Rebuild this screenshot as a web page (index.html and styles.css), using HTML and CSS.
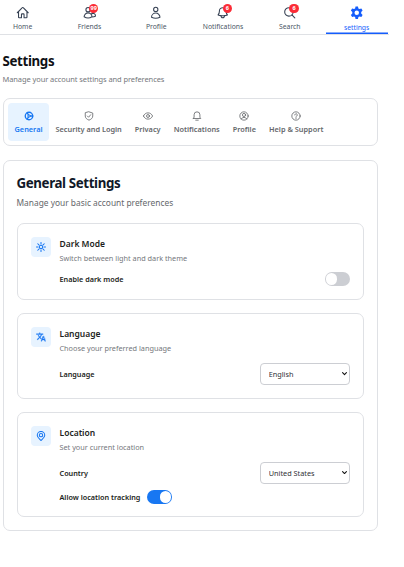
FILE: index.html
```html
<!DOCTYPE html>
<html lang="en">
<head>
<meta charset="utf-8">
<title>Settings</title>
<link rel="stylesheet" href="styles.css">
</head>
<body>
<nav class="nav">
  <a class="nav-item"><svg class="nav-icon" viewBox="0 0 24 24"><path d="M2.3 12 11.2 3a1.1 1.1 0 0 1 1.6 0l8.9 9M4.5 9.8v10.1c0 .6.5 1.1 1.1 1.1h4.1v-5.9c0-.6.5-1.1 1.1-1.1h2.4c.6 0 1.1.5 1.1 1.1V21h4.1c.6 0 1.1-.5 1.1-1.1V9.8"/></svg><span>Home</span></a>
  <a class="nav-item"><svg class="nav-icon" viewBox="0 0 24 24"><circle cx="9" cy="6.5" r="3.8"/><circle cx="18" cy="8.5" r="2.7"/><path d="M2 19.2a7 7 0 0 1 14 0 13 13 0 0 1-14 0ZM16 19.4c2.3 0 4.2-.2 6-1.2a4.2 4.2 0 0 0-7.7-3"/></svg><b class="badge">99</b><span>Friends</span></a>
  <a class="nav-item"><svg class="nav-icon" viewBox="0 0 24 24"><circle cx="12" cy="6" r="3.8"/><path d="M4.5 20.1a7.5 7.5 0 0 1 15 0A17.500 17.500 0 0 1 12 21.800c-2.700 0-5.200-.6-7.500-1.700Z"/></svg><span>Profile</span></a>
  <a class="nav-item"><svg class="nav-icon" viewBox="0 0 24 24"><path d="M14.900 17.100a24 24 0 0 0 5.400-1.300A9 9 0 0 1 18 9.800V9A6 6 0 0 0 6 9v.8a9 9 0 0 1-2.300 6 24 24 0 0 0 5.400 1.300m5.800 0a24 24 0 0 1-5.800 0m5.800 0a3 3 0 1 1-5.800 0"/></svg><b class="badge">6</b><span>Notifications</span></a>
  <a class="nav-item"><svg class="nav-icon" viewBox="0 0 24 24"><circle cx="10.500" cy="10.500" r="7.500"/><path d="m21 21-5.200-5.200"/></svg><b class="badge">6</b><span>Search</span></a>
  <a class="nav-item current"><svg class="nav-icon" viewBox="0 0 24 24"><path class="solid" fill-rule="evenodd" d="M9.800 1h4.400l.7 3.300 2 1.100 3.300-1 2.200 3.800-2.500 2.300v2.900l2.500 2.400-2.200 3.800-3.300-1-2 1.100-.7 3.300H9.800l-.7-3.300-2-1.100-3.300 1-2.200-3.800 2.500-2.400v-2.900L1.600 8.200l2.200-3.800 3.300 1 2-1.100ZM12 8a4 4 0 1 0 0 8 4 4 0 0 0 0-8Z"/></svg><span>settings</span></a>
</nav>
<main class="page">
  <h1>Settings</h1>
  <p class="lead">Manage your account settings and preferences</p>
  <div class="tabs">
    <a class="tab active"><svg class="icon" viewBox="0 0 24 24"><circle class="thick" cx="12" cy="12" r="9"/><circle cx="12" cy="12" r="3"/><path class="thick" d="M15 12h6M10.500 9.400l-3-5.200M10.500 14.600l-3 5.200"/></svg><span>General</span></a>
    <a class="tab"><svg class="icon" viewBox="0 0 24 24"><path d="m8 12 3 3 5-6M12 2 21 5v7c0 5-4 8-9 10-5-2-9-5-9-10V5Z"/></svg><span>Security and Login</span></a>
    <a class="tab"><svg class="icon" viewBox="0 0 24 24"><path d="M1 12c2-4.500 6-7.500 11-7.500s9 3 11 7.500c-2 4.500-6 7.500-11 7.500S3 16.500 1 12Z"/><circle cx="12" cy="12" r="3.500"/></svg><span>Privacy</span></a>
    <a class="tab"><svg class="icon" viewBox="0 0 24 24"><path d="M3 18h18l-2-3V9A7 7 0 0 0 5 9v6ZM9 22h6"/></svg><span>Notifications</span></a>
    <a class="tab"><svg class="icon" viewBox="0 0 24 24"><circle cx="12" cy="12" r="10"/><circle cx="12" cy="9.500" r="3.800"/><path d="M5.500 19a7.500 7.500 0 0 1 13 0"/></svg><span>Profile</span></a>
    <a class="tab"><svg class="icon" viewBox="0 0 24 24"><circle cx="12" cy="12" r="10"/><path d="M9 9.500a3 3 0 1 1 4.500 2.600c-1 .6-1.500 1-1.500 2.200M12 16.500v1.500"/></svg><span>Help &amp; Support</span></a>
  </div>
  <section class="panel">
    <h2>General Settings</h2>
    <p class="sub">Manage your basic account preferences</p>
    <article class="card dark-mode">
      <div class="tile"><svg class="icon" viewBox="0 0 24 24"><circle cx="12" cy="12" r="4"/><path d="M12 1v4M12 19v4M1 12h4M19 12h4M4.200 4.200 7 7M17 17l2.800 2.800M4.200 19.800 7 17M17 7l2.800-2.800"/></svg></div>
      <div class="body">
        <h3>Dark Mode</h3>
        <p class="desc">Switch between light and dark theme</p>
        <div class="row"><span class="label">Enable dark mode</span><span class="switch"></span></div>
      </div>
    </article>
    <article class="card language">
      <div class="tile"><svg class="icon" viewBox="0 0 24 24"><path class="glyph" d="m12.870 15.070-2.540-2.510.03-.03A17.520 17.520 0 0 0 14.070 6H17V4h-7V2H8v2H1v2h11.170C11.500 7.920 10.440 9.750 9 11.350 8.070 10.320 7.300 9.190 6.690 8h-2c.73 1.630 1.730 3.170 2.980 4.560l-5.090 5.020L4 19l5-5 3.110 3.110zM18.500 10h-2L12 22h2l1.120-3h4.750L21 22h2zm-2.620 7 1.620-4.330L19.120 17z"/></svg></div>
      <div class="body">
        <h3>Language</h3>
        <p class="desc">Choose your preferred language</p>
        <div class="row"><span class="label">Language</span><span class="picker"><select><option>English</option></select><svg class="arrow" viewBox="0 0 6 4"><path d="m.7.700 2.300 2.300L5.300.7"/></svg></span></div>
      </div>
    </article>
    <article class="card location">
      <div class="tile"><svg class="icon" viewBox="0 0 24 24"><path d="M12 23c-2-3-9-6.500-9-13a9 9 0 0 1 18 0c0 6.500-7 10-9 13Z"/><circle cx="12" cy="10" r="4"/></svg></div>
      <div class="body">
        <h3>Location</h3>
        <p class="desc">Set your current location</p>
        <div class="row"><span class="label">Country</span><span class="picker"><select><option>United States</option></select><svg class="arrow" viewBox="0 0 6 4"><path d="m.7.700 2.300 2.300L5.300.7"/></svg></span></div>
        <div class="row tracking"><span class="label">Allow location tracking</span><span class="switch on"></span></div>
      </div>
    </article>
  </section>
</main>
</body>
</html>
```
FILE: styles.css
```css
* { box-sizing: border-box; }
body { margin: 0; background: #fff; color: #1c1e21; font-family: "Noto Sans", sans-serif; overflow: hidden; }
h1, h2, h3, p { margin: 0; white-space: nowrap; }
svg { display: block; fill: none; stroke: currentColor; stroke-width: 2; stroke-linecap: round; stroke-linejoin: round; }
.solid { fill: currentColor; stroke: none; }
.glyph { fill: currentColor; stroke-width: .8; }
.thick { stroke-width: 3.2; }

.nav { display: flex; gap: 4.8px; width: 397.5px; height: 34.500px; margin-left: -8.400px; border-bottom: 1px solid #dfe1e5; }
.nav-item { position: relative; flex: 0 0 62px; height: 34px; padding-top: 6px; display: flex; flex-direction: column; align-items: center; font-size: 6.800px; line-height: 10px; color: #4a5565; }
.nav-icon { width: 13.500px; height: 13.500px; margin-bottom: 2px; stroke-width: 1.900; color: #364153; }
.badge { position: absolute; left: 30.500px; top: 3.500px; width: 9.500px; height: 9.500px; border-radius: 50%; background: #fb2c36; color: #fff; font-size: 5.500px; line-height: 9.500px; text-align: center; }
.current { color: #155dfc; box-shadow: inset 0 -1.500px #155dfc; }
.current .nav-icon { color: #155dfc; margin-bottom: 3px; }

.page { padding: 17px 0 0 2.500px; width: 377.700px; }
h1 { font-size: 13.300px; line-height: 18px; font-weight: 700; letter-spacing: -.35px; color: #0f1115; }
.lead { margin-top: 3px; font-size: 7.500px; line-height: 12px; letter-spacing: -.09px; color: #75777c; }
.tabs { display: flex; height: 48.500px; margin-top: 13px; padding: 4.500px; border: 1px solid #dfe1e5; border-radius: 7px; }
.tab { height: 37.500px; padding: 7.500px 6.500px 0; border-radius: 4px; display: flex; flex-direction: column; align-items: center; gap: 3.500px; font-size: 7.350px; line-height: 11px; font-weight: 600; color: #65676b; white-space: nowrap; }
.icon { width: 10px; height: 10px; }
.active { color: #1877f2; background: #e7f3ff; }

.panel { height: 371.500px; margin-top: 13.500px; padding: 12.700px 13px; border: 1px solid #dfe1e5; border-radius: 7px; }
h2 { font-size: 13.300px; line-height: 20px; font-weight: 700; letter-spacing: -.37px; color: #101828; }
.sub { margin-top: 3px; margin-bottom: 13.700px; font-size: 8.400px; line-height: 13px; color: #65676b; }
.card { display: flex; gap: 9px; padding: 13px; border: 1px solid #dfe1e5; border-radius: 7px; margin-top: 13.300px; }
.dark-mode { height: 77px; }
.language { height: 85.500px; }
.location { height: 105.500px; }
.tile { flex: none; width: 20px; height: 20px; border-radius: 4px; background: #e7f3ff; color: #1877f2; display: grid; place-items: center; }
.tile .icon { stroke-width: 2.500; }
.body { flex: 1; }
h3 { font-size: 8.500px; line-height: 14px; font-weight: 600; color: #1c1e21; }
.desc { margin-top: 2px; font-size: 7.300px; line-height: 11px; color: #75777c; }
.row { display: flex; align-items: center; justify-content: space-between; margin-top: 9px; }
.dark-mode .row { margin-top: 8px; height: 14px; }
.label { font-size: 7.250px; line-height: 12px; font-weight: 600; }
.switch { width: 25px; height: 14px; padding: 1.200px; border-radius: 7px; background: #ccced3; display: flex; }
.switch::before { content: ""; width: 11.600px; height: 11.600px; border-radius: 50%; background: #fff; }
.on { background: #1877f2; justify-content: flex-end; }
.location .tracking { margin-top: 6px; justify-content: flex-start; gap: 7px; }
.picker { position: relative; width: 90px; height: 22px; }
select { appearance: none; width: 90px; height: 22px; margin: 0; padding: 0 8px; display: block; border: 1px solid #ccced3; border-radius: 4px; background: #fff; color: #303236; font: 7.300px "Noto Sans", sans-serif; }
.arrow { position: absolute; right: 2.500px; top: 9px; width: 5px; height: 3.500px; stroke-width: 1.300; color: #111; }
```
